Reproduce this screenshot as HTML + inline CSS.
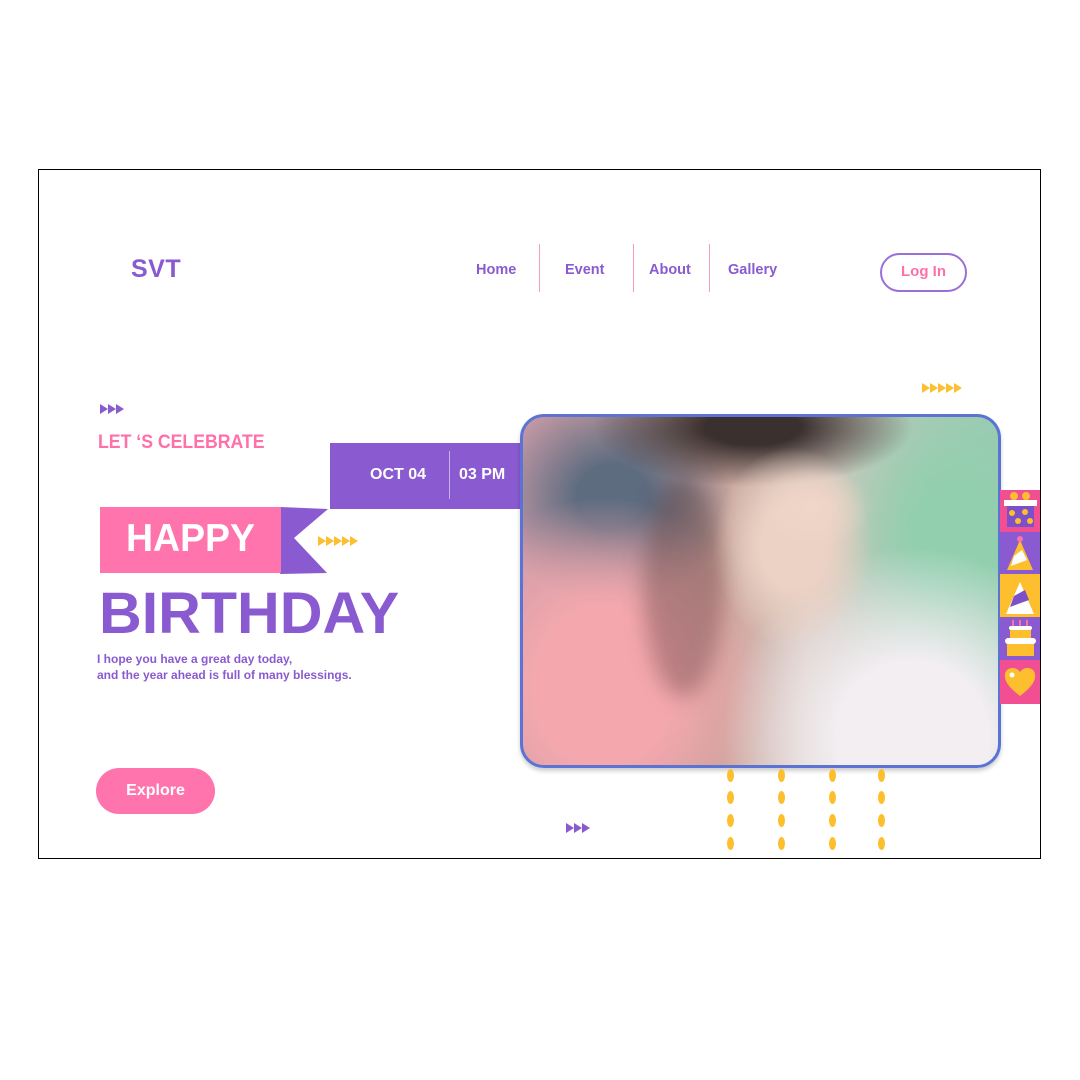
<!DOCTYPE html>
<html><head><meta charset="utf-8">
<style>
*{margin:0;padding:0;box-sizing:border-box}
body{width:1080px;height:1080px;background:#fff;position:relative;overflow:hidden;font-family:"Liberation Sans","DejaVu Sans",sans-serif;font-weight:bold}
.frame{position:absolute;left:38px;top:169px;width:1003px;height:690px;border:1px solid #000;overflow:hidden}
.a{position:absolute;white-space:nowrap}
.purple{color:#8a5ad0}
.nav{font-size:14.5px;color:#8a5ad0}
.sep{position:absolute;width:1px;background:#f59cc0;top:244px;height:48px}
.tri{position:absolute;display:flex;gap:0}
.tri i{display:block;width:0;height:0;border-top:5px solid transparent;border-bottom:5px solid transparent;border-left:8px solid currentColor}
.dot{position:absolute;width:7px;height:13px;border-radius:50%;background:#fdbf2d}
</style></head><body>
<div class="frame"></div>

<div class="a purple" style="left:131px;top:255px;font-size:25px;font-weight:900;letter-spacing:0.5px">SVT</div>

<div class="a nav" style="left:476px;top:262px">Home</div>
<div class="sep" style="left:539px"></div>
<div class="a nav" style="left:565px;top:262px">Event</div>
<div class="sep" style="left:633px"></div>
<div class="a nav" style="left:649px;top:262px">About</div>
<div class="sep" style="left:709px"></div>
<div class="a nav" style="left:728px;top:262px">Gallery</div>
<div class="a" style="left:880px;top:253px;width:87px;height:39px;border:2px solid #9a70d8;border-radius:20px;color:#ff6fa8;font-size:15px;text-align:center;line-height:34px">Log In</div>

<div class="tri" style="left:100px;top:404px;color:#8a5ad0"><i></i><i></i><i></i></div>
<div class="tri" style="left:922px;top:383px;color:#fdbf2d"><i></i><i></i><i></i><i></i><i></i></div>
<div class="tri" style="left:318px;top:536px;color:#fdbf2d"><i></i><i></i><i></i><i></i><i></i></div>
<div class="tri" style="left:566px;top:823px;color:#8a5ad0"><i></i><i></i><i></i></div>

<div class="a" style="left:98px;top:432px;font-size:19px;color:#ff6fa8;transform:scaleX(0.93);transform-origin:left">LET ‘S CELEBRATE</div>

<div class="a" style="left:330px;top:443px;width:192px;height:66px;background:#8a5ad0"></div>
<div class="a" style="left:449px;top:451px;width:1px;height:48px;background:#c8b0f0"></div>
<div class="a" style="left:370px;top:466px;color:#fff;font-size:16px">OCT 04</div>
<div class="a" style="left:459px;top:466px;color:#fff;font-size:16px">03 PM</div>

<svg class="a" style="left:280px;top:507px" width="50" height="67"><polygon points="0,0 48,2 14,31 47,66 0,67" fill="#8a5ad0"/></svg>
<div class="a" style="left:100px;top:507px;width:181px;height:66px;background:#ff74ad"></div>
<div class="a" style="left:126px;top:517px;color:#fff;font-size:39px;font-weight:900;transform:scaleX(0.96);transform-origin:left">HAPPY</div>

<div class="a" style="left:99px;top:580px;color:#8a5ad0;font-size:61px;font-weight:900;transform:scaleX(0.97) scaleY(0.95);transform-origin:top left">BIRTHDAY</div>

<div class="a purple" style="left:97px;top:651px;font-size:12px;line-height:16px">I hope you have a great day today,<br>and the year ahead is full of many blessings.</div>

<div class="a" style="left:96px;top:768px;width:119px;height:46px;border-radius:23px;background:#ff74ad;color:#fff;font-size:16px;text-align:center;line-height:45px">Explore</div>

<div class="a" style="left:520px;top:414px;width:481px;height:354px;border:3px solid #5b74d4;border-radius:24px;overflow:hidden;box-shadow:0 3px 4px rgba(0,0,0,.2);
background:
radial-gradient(ellipse 60px 40px at 290px 90px,#f0d6c8 0%,rgba(240,214,200,0) 100%),
radial-gradient(ellipse 80px 100px at 270px 130px,#ecd2c4 40%,rgba(236,210,196,0) 100%),
radial-gradient(ellipse 40px 14px at 270px 132px,#d48a82 40%,rgba(212,138,130,0) 100%),
radial-gradient(ellipse 160px 60px at 230px 10px,#3a302e 30%,rgba(58,48,46,0) 100%),
radial-gradient(ellipse 190px 190px at 390px 320px,#f2eef2 40%,rgba(230,225,235,0) 100%),
radial-gradient(ellipse 130px 180px at 430px 120px,#92cfae 30%,rgba(146,207,174,0) 100%),
radial-gradient(ellipse 170px 190px at 80px 270px,#f4a8ae 40%,rgba(244,168,174,0) 100%),
radial-gradient(ellipse 120px 110px at 90px 80px,#5e6c80 30%,rgba(94,108,128,0) 100%),
linear-gradient(90deg,#c89aa8 0%,#c6a098 40%,#d8c8c0 60%,#9cc8b4 100%)">
<div class="a" style="left:120px;top:60px;width:80px;height:220px;border-radius:50%;background:rgba(80,50,50,.35);filter:blur(10px)"></div>
</div>

<svg class="a" style="left:1000px;top:490px" width="40" height="214">
<rect x="0" y="0" width="40" height="42" fill="#f24f92"/>
<rect x="0" y="42" width="40" height="42" fill="#8a5ad0"/>
<rect x="0" y="84" width="40" height="43" fill="#fdbf2d"/>
<rect x="0" y="127" width="40" height="43" fill="#8a5ad0"/>
<rect x="0" y="170" width="40" height="44" fill="#f24f92"/>
<rect x="7" y="15" width="27" height="22" fill="#7b50c8"/>
<rect x="4" y="10" width="33" height="6" fill="#fff"/>
<circle cx="12" cy="23" r="3" fill="#fdbf2d"/><circle cx="25" cy="22" r="3" fill="#fdbf2d"/><circle cx="18" cy="31" r="3" fill="#fdbf2d"/><circle cx="30" cy="31" r="3" fill="#fdbf2d"/>
<circle cx="14" cy="6" r="4" fill="#fdbf2d"/><circle cx="26" cy="6" r="4" fill="#fdbf2d"/>
<polygon points="20,50 7,80 33,80" fill="#fdbf2d"/><polygon points="14,66 22,60 27,70 11,76" fill="#fff"/>
<circle cx="20" cy="49" r="3" fill="#ff6fa8"/>
<polygon points="20,92 6,124 34,124" fill="#fff"/><polygon points="14,106 25,100 29,110 10,117" fill="#7b50c8"/>
<rect x="7" y="148" width="27" height="18" fill="#fdbf2d"/><rect x="5" y="148" width="31" height="6" rx="3" fill="#fff"/>
<rect x="10" y="138" width="21" height="10" fill="#fdbf2d"/><rect x="9" y="136" width="23" height="4" rx="2" fill="#fff"/>
<rect x="12" y="130" width="2" height="6" fill="#ff6fa8"/><rect x="19" y="130" width="2" height="6" fill="#ff6fa8"/><rect x="26" y="130" width="2" height="6" fill="#ff6fa8"/>
<path d="M20 206 C10 198 4 192 5 184 C6 177 16 176 20 182 C24 176 34 177 35 184 C36 192 30 198 20 206Z" fill="#fdbf2d"/>
<circle cx="12" cy="185" r="2.5" fill="#fff"/>
</svg>

<div class="dot" style="left:727px;top:769px"></div><div class="dot" style="left:778px;top:769px"></div><div class="dot" style="left:829px;top:769px"></div><div class="dot" style="left:878px;top:769px"></div>
<div class="dot" style="left:727px;top:791px"></div><div class="dot" style="left:778px;top:791px"></div><div class="dot" style="left:829px;top:791px"></div><div class="dot" style="left:878px;top:791px"></div>
<div class="dot" style="left:727px;top:814px"></div><div class="dot" style="left:778px;top:814px"></div><div class="dot" style="left:829px;top:814px"></div><div class="dot" style="left:878px;top:814px"></div>
<div class="dot" style="left:727px;top:837px"></div><div class="dot" style="left:778px;top:837px"></div><div class="dot" style="left:829px;top:837px"></div><div class="dot" style="left:878px;top:837px"></div>
</body></html>
